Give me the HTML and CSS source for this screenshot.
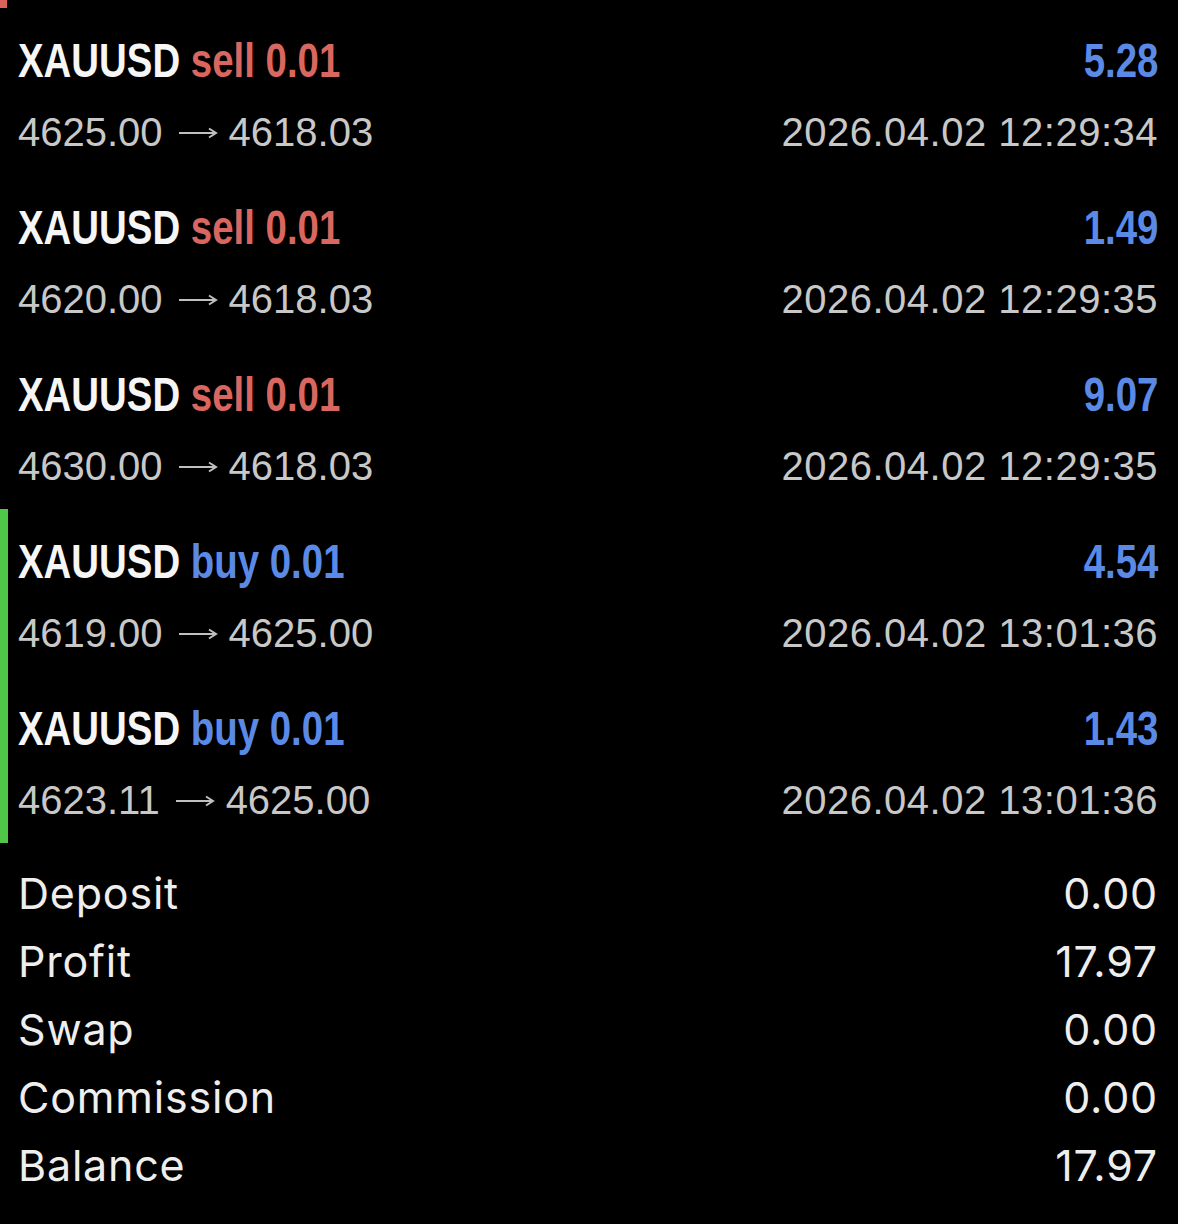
FILE: index.html
```html
<!DOCTYPE html>
<html lang="en">
<head>
  <meta charset="UTF-8" />
  <meta name="viewport" content="width=device-width, initial-scale=1.0" />
  <title>History</title>
  <link rel="stylesheet" href="styles.css">
</head>
<body>
  <div class="prev-mark"></div>

  <div class="deals">
    <div class="deal">
      <div class="title"><span class="narrow">XAUUSD <span class="sell">sell 0.01</span></span></div>
      <div class="value"><span class="narrow">5.28</span></div>
      <div class="prices">4625.00<svg class="arrow" viewBox="0 0 40 14"><path d="M1 7H38M31 2.5L38 7L31 11.5"/></svg>4618.03</div>
      <div class="time">2026.04.02 12:29:34</div>
    </div>
    <div class="deal">
      <div class="title"><span class="narrow">XAUUSD <span class="sell">sell 0.01</span></span></div>
      <div class="value"><span class="narrow">1.49</span></div>
      <div class="prices">4620.00<svg class="arrow" viewBox="0 0 40 14"><path d="M1 7H38M31 2.5L38 7L31 11.5"/></svg>4618.03</div>
      <div class="time">2026.04.02 12:29:35</div>
    </div>
    <div class="deal">
      <div class="title"><span class="narrow">XAUUSD <span class="sell">sell 0.01</span></span></div>
      <div class="value"><span class="narrow">9.07</span></div>
      <div class="prices">4630.00<svg class="arrow" viewBox="0 0 40 14"><path d="M1 7H38M31 2.5L38 7L31 11.5"/></svg>4618.03</div>
      <div class="time">2026.04.02 12:29:35</div>
    </div>
    <div class="deal marked-buy">
      <div class="title"><span class="narrow">XAUUSD <span class="buy">buy 0.01</span></span></div>
      <div class="value"><span class="narrow">4.54</span></div>
      <div class="prices">4619.00<svg class="arrow" viewBox="0 0 40 14"><path d="M1 7H38M31 2.5L38 7L31 11.5"/></svg>4625.00</div>
      <div class="time">2026.04.02 13:01:36</div>
    </div>
    <div class="deal marked-buy">
      <div class="title"><span class="narrow">XAUUSD <span class="buy">buy 0.01</span></span></div>
      <div class="value"><span class="narrow">1.43</span></div>
      <div class="prices">4623.11<svg class="arrow" viewBox="0 0 40 14"><path d="M1 7H38M31 2.5L38 7L31 11.5"/></svg>4625.00</div>
      <div class="time">2026.04.02 13:01:36</div>
    </div>
  </div>

  <div class="summary">
    <div class="line"><span>Deposit</span><span>0.00</span></div>
    <div class="line"><span>Profit</span><span>17.97</span></div>
    <div class="line"><span>Swap</span><span>0.00</span></div>
    <div class="line"><span>Commission</span><span>0.00</span></div>
    <div class="line"><span>Balance</span><span>17.97</span></div>
  </div>
</body>
</html>
```

FILE: styles.css
```css
body { margin: 0; background: #000; color: #f4f4f4; font-family: "Liberation Sans", Arial, sans-serif; }
.prev-mark { width: 7px; height: 8px; background: #d9625a; }

.deal { display: grid; grid-template-columns: 1fr auto; row-gap: 0; height: 167px; box-sizing: border-box; padding: 25px 20px 0 10px; border-left: 8px solid transparent; }
.deal.marked-buy { border-left-color: #4fc84a; }
.title, .value { font-weight: bold; font-size: 48px; line-height: 56px; white-space: nowrap; }
.narrow { display: inline-block; transform: scaleX(0.8); }
.title .narrow { transform-origin: left center; }
.value .narrow { transform-origin: right center; }
.title { color: #f6f6f6; }
.value { text-align: right; color: #5b8ae6; }
.sell { color: #d9675f; }
.buy { color: #5b8ae6; }
.prices, .time { font-size: 40px; line-height: 46px; color: #c8c8c8; }
.time { text-align: right; letter-spacing: 0.5px; }
.arrow { width: 40px; height: 14px; margin: 0 11px 0 15px; vertical-align: 6px; fill: none; stroke: #c0c0c0; stroke-width: 2; }

.summary { padding: 16px 20px 20px 18px; font-family: Inter, "Liberation Sans", sans-serif; font-size: 43px; letter-spacing: 0.8px; color: #eeeeee; }
.line { display: flex; justify-content: space-between; line-height: 68px; }
```
